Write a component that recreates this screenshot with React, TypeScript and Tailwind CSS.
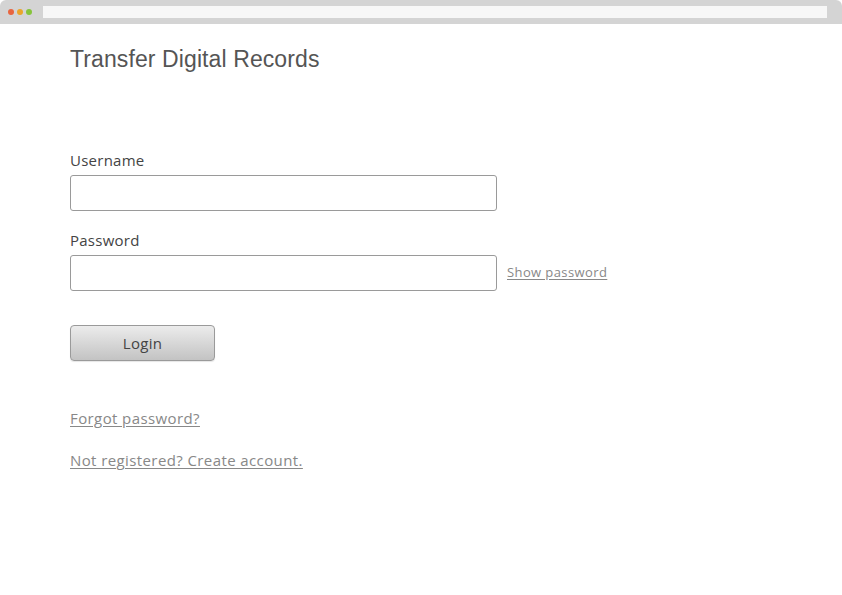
export default function App() {
  return (
    <main className="w-[842px] h-[595px] bg-white overflow-hidden">
      <div className="h-[24px] bg-[#d4d4d4] rounded-t-[6px] flex items-center pl-[8px] pr-[15px]">
        <div className="flex gap-[3px]">
          <span className="w-[6px] h-[6px] rounded-full bg-[#e8653f]" />
          <span className="w-[6px] h-[6px] rounded-full bg-[#eaa52a]" />
          <span className="w-[6px] h-[6px] rounded-full bg-[#86c43a]" />
        </div>
        <div className="ml-[11px] flex-1 h-[12px] bg-[#f7f7f7]" />
      </div>

      <div className="pl-[70px] pt-[21px] font-['Open_Sans',sans-serif]">
        <h1 className="font-['Liberation_Sans',Arial,sans-serif] text-[23px] leading-[28px] tracking-[0.1px] text-[#555]">
          Transfer Digital Records
        </h1>

        <form className="mt-[77px]" onSubmit={(e) => e.preventDefault()}>
          <label className="block text-[15px] leading-[20px] tracking-[0.25px] text-[#444]">Username</label>
          <input
            type="text"
            className="mt-[5px] block w-[427px] h-[36px] border border-[#9a9a9a] rounded-[3px] bg-white outline-none"
          />

          <label className="block mt-[19px] text-[15px] leading-[20px] tracking-[0.25px] text-[#444]">Password</label>
          <div className="mt-[5px] flex items-center gap-[10px]">
            <input
              type="password"
              className="block w-[427px] h-[36px] border border-[#9a9a9a] rounded-[3px] bg-white outline-none"
            />
            <a href="#" className="text-[13px] tracking-[0.4px] text-[#888] underline underline-offset-2">
              Show password
            </a>
          </div>

          <button
            type="submit"
            className="mt-[34px] w-[145px] h-[36px] rounded-[4px] border border-[#9a9a9a] bg-gradient-to-b from-[#ececec] to-[#c3c3c3] text-[15px] tracking-[0.3px] text-[#444] shadow-[0_1px_1px_rgba(0,0,0,0.1)]"
          >
            Login
          </button>
        </form>

        <div className="mt-[47px] flex flex-col gap-[22px] text-[15px] leading-[20px] tracking-[0.4px] text-[#888]">
          <a href="#" className="underline underline-offset-2 self-start">Forgot password?</a>
          <a href="#" className="underline underline-offset-2 self-start">Not registered? Create account.</a>
        </div>
      </div>
    </main>
  );
}
